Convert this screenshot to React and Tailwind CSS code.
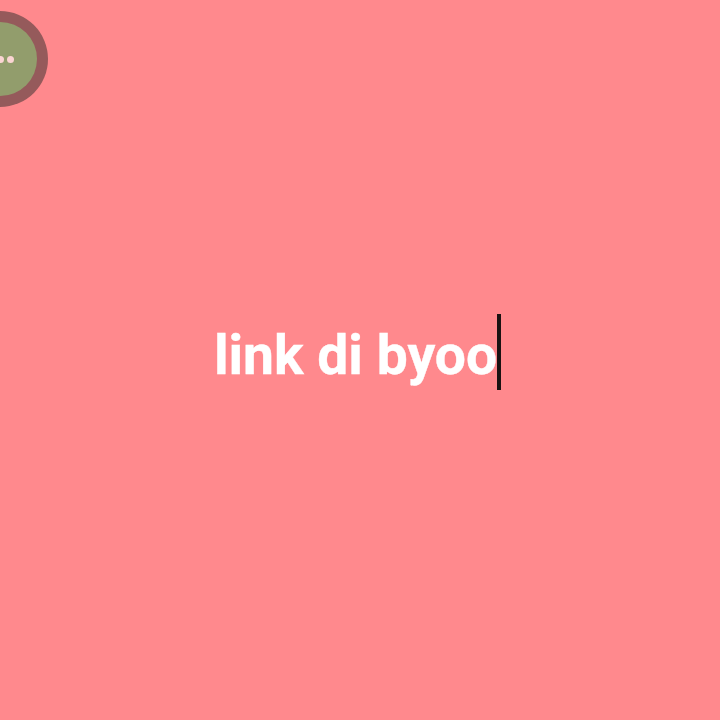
export default function App() {
  return (
    <div className="relative w-full h-[720px] overflow-hidden bg-[#ff898d] flex items-center justify-center pb-[16px] pr-[5px] font-['Roboto',sans-serif]">
      {/* Floating menu button */}
      <div className="absolute left-[-48px] top-[11px] w-[96px] h-[96px] rounded-full bg-[#955a5b] flex items-center justify-center">
        <div className="w-[74px] h-[74px] rounded-full bg-[#929d6c] flex items-center justify-center gap-[3px]">
          <span className="w-[7px] h-[7px] rounded-full bg-[#fbd5d3]" />
          <span className="w-[7px] h-[7px] rounded-full bg-[#fbd5d3]" />
          <span className="w-[7px] h-[7px] rounded-full bg-[#fbd5d3]" />
        </div>
      </div>

      <div className="flex items-center">
        <span className="pt-[6px] text-[55.2px] leading-[70px] font-bold text-white whitespace-nowrap [-webkit-text-stroke:0.4px_white]">link di byoo</span>
        <span className="w-[4px] h-[76px] bg-[#1a1212]" />
      </div>
    </div>
  );
}
